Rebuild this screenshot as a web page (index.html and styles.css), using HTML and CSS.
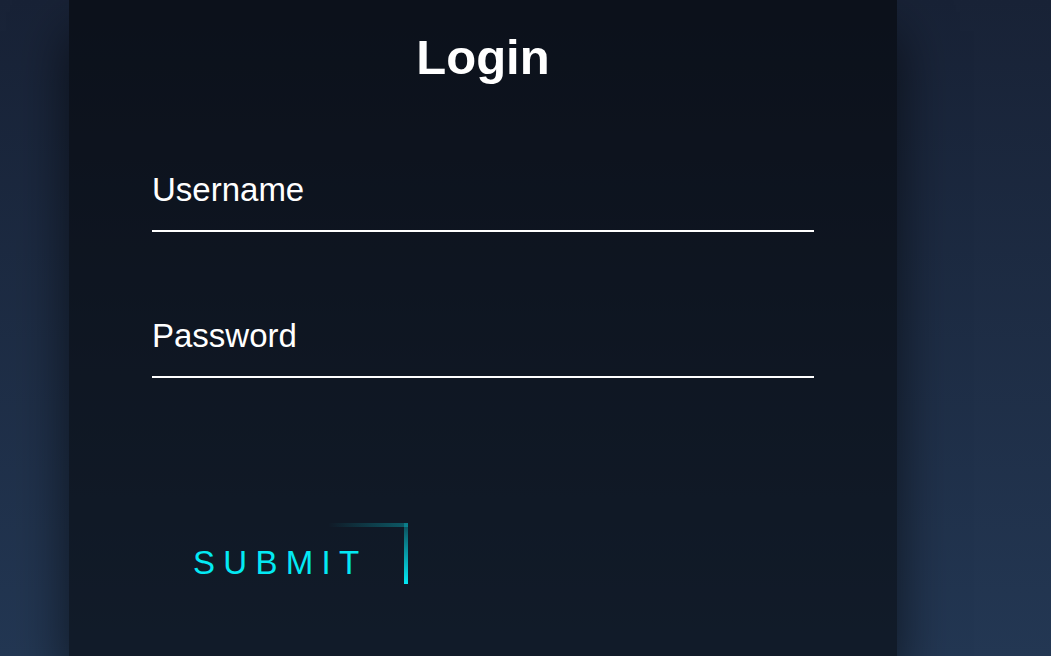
FILE: index.html
```html
<!DOCTYPE html>
<html lang="en">
<head>
<meta charset="utf-8">
<title>Login</title>
<link rel="stylesheet" href="styles.css">
</head>
<body>
  <div class="login-box">
    <h2 class="title">Login</h2>
    <form class="form">
      <div class="user-box">
        <label class="label">Username</label>
      </div>
      <div class="user-box">
        <label class="label">Password</label>
      </div>
      <a class="submit" href="#">
        <span class="line line-top"></span>
        <span class="line line-right"></span>
        Submit
      </a>
    </form>
  </div>
</body>
</html>
```
FILE: styles.css
```css
html, body {
  margin: 0;
  padding: 0;
  height: 100%;
}
body {
  font-family: "Liberation Sans", Arial, sans-serif;
  background: linear-gradient(#182236, #233753);
  overflow: hidden;
}
.login-box {
  box-sizing: border-box;
  width: 828px;
  margin-left: 69px;
  height: 100%;
  padding: 29px 83px 0;
  background: rgba(0, 0, 0, 0.5);
  box-shadow: 0 31px 52px rgba(0, 0, 0, 0.6);
}
.title {
  margin: 0 0 65px;
  padding: 0;
  color: #fff;
  font-size: 49px;
  font-weight: bold;
  text-align: center;
}
.form {
  display: flex;
  flex-direction: column;
  align-items: flex-start;
}
.user-box {
  align-self: stretch;
  padding: 21px 0;
  margin-bottom: 64px;
  border-bottom: 2px solid #fff;
  color: #fff;
  font-size: 33px;
  line-height: 38px;
}
.label {
  display: block;
}
.submit {
  position: relative;
  display: inline-block;
  margin-top: 81px;
  padding: 21px 41px;
  color: #03e9f4;
  font-size: 33px;
  line-height: 38px;
  text-decoration: none;
  text-transform: uppercase;
  letter-spacing: 8.3px;
  overflow: hidden;
}
.line {
  position: absolute;
  display: block;
}
.line-top {
  top: 0;
  left: 176px;
  width: 100%;
  height: 4px;
  background: linear-gradient(90deg, transparent, #03e9f4);
}
.line-right {
  right: 0;
  top: -19px;
  width: 4px;
  height: 100%;
  background: linear-gradient(180deg, transparent, #03e9f4);
}
```
